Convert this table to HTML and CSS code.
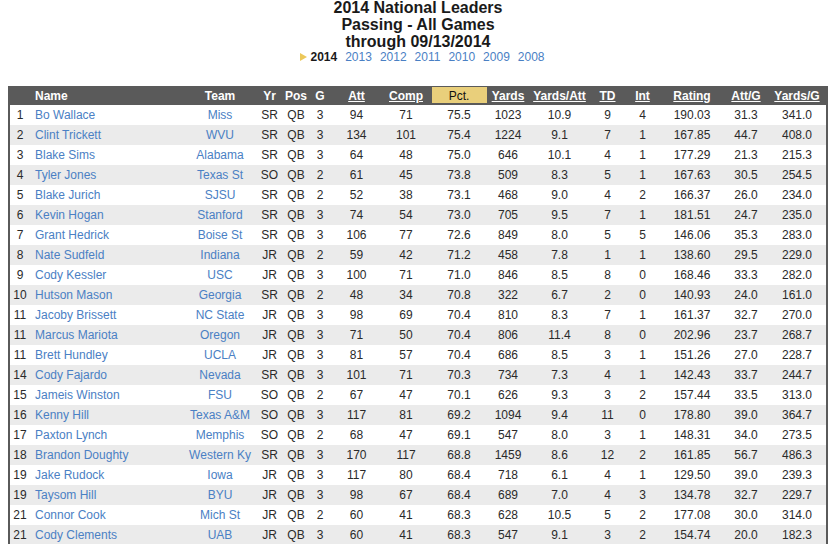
FILE: index.html
```html
<!DOCTYPE html>
<html>
<head>
<meta charset="utf-8">
<link rel="stylesheet" href="styles.css">
</head>
<body>
<div class="page">
  <h1 class="title">2014 National Leaders<br>Passing - All Games<br>through 09/13/2014</h1>
  <div class="years">
    <span class="marker"></span><span class="current">2014</span><a href="#">2013</a><a href="#">2012</a><a href="#">2011</a><a href="#">2010</a><a href="#">2009</a><a href="#">2008</a>
  </div>
  <table class="stats">
    <colgroup>
      <col class="c-rank"><col class="c-name"><col class="c-team"><col class="c-yr"><col class="c-pos"><col class="c-g"><col class="c-att"><col class="c-comp"><col class="c-pct"><col class="c-yds"><col class="c-ypa"><col class="c-td"><col class="c-int"><col class="c-rat"><col class="c-apg"><col class="c-ypg">
    </colgroup>
    <thead>
      <tr>
        <th></th><th class="left">Name</th><th>Team</th><th>Yr</th><th>Pos</th><th>G</th>
        <th><a href="#">Att</a></th><th><a href="#">Comp</a></th><th class="sorted">Pct.</th><th><a href="#">Yards</a></th><th><a href="#">Yards/Att</a></th><th><a href="#">TD</a></th><th><a href="#">Int</a></th><th><a href="#">Rating</a></th><th><a href="#">Att/G</a></th><th><a href="#">Yards/G</a></th>
      </tr>
    </thead>
    <tbody>
      <tr><td>1</td><td class="left"><a href="#">Bo Wallace</a></td><td><a href="#">Miss</a></td><td>SR</td><td>QB</td><td>3</td><td>94</td><td>71</td><td>75.5</td><td>1023</td><td>10.9</td><td>9</td><td>4</td><td>190.03</td><td>31.3</td><td>341.0</td></tr>
      <tr><td>2</td><td class="left"><a href="#">Clint Trickett</a></td><td><a href="#">WVU</a></td><td>SR</td><td>QB</td><td>3</td><td>134</td><td>101</td><td>75.4</td><td>1224</td><td>9.1</td><td>7</td><td>1</td><td>167.85</td><td>44.7</td><td>408.0</td></tr>
      <tr><td>3</td><td class="left"><a href="#">Blake Sims</a></td><td><a href="#">Alabama</a></td><td>SR</td><td>QB</td><td>3</td><td>64</td><td>48</td><td>75.0</td><td>646</td><td>10.1</td><td>4</td><td>1</td><td>177.29</td><td>21.3</td><td>215.3</td></tr>
      <tr><td>4</td><td class="left"><a href="#">Tyler Jones</a></td><td><a href="#">Texas St</a></td><td>SO</td><td>QB</td><td>2</td><td>61</td><td>45</td><td>73.8</td><td>509</td><td>8.3</td><td>5</td><td>1</td><td>167.63</td><td>30.5</td><td>254.5</td></tr>
      <tr><td>5</td><td class="left"><a href="#">Blake Jurich</a></td><td><a href="#">SJSU</a></td><td>SR</td><td>QB</td><td>2</td><td>52</td><td>38</td><td>73.1</td><td>468</td><td>9.0</td><td>4</td><td>2</td><td>166.37</td><td>26.0</td><td>234.0</td></tr>
      <tr><td>6</td><td class="left"><a href="#">Kevin Hogan</a></td><td><a href="#">Stanford</a></td><td>SR</td><td>QB</td><td>3</td><td>74</td><td>54</td><td>73.0</td><td>705</td><td>9.5</td><td>7</td><td>1</td><td>181.51</td><td>24.7</td><td>235.0</td></tr>
      <tr><td>7</td><td class="left"><a href="#">Grant Hedrick</a></td><td><a href="#">Boise St</a></td><td>SR</td><td>QB</td><td>3</td><td>106</td><td>77</td><td>72.6</td><td>849</td><td>8.0</td><td>5</td><td>5</td><td>146.06</td><td>35.3</td><td>283.0</td></tr>
      <tr><td>8</td><td class="left"><a href="#">Nate Sudfeld</a></td><td><a href="#">Indiana</a></td><td>JR</td><td>QB</td><td>2</td><td>59</td><td>42</td><td>71.2</td><td>458</td><td>7.8</td><td>1</td><td>1</td><td>138.60</td><td>29.5</td><td>229.0</td></tr>
      <tr><td>9</td><td class="left"><a href="#">Cody Kessler</a></td><td><a href="#">USC</a></td><td>JR</td><td>QB</td><td>3</td><td>100</td><td>71</td><td>71.0</td><td>846</td><td>8.5</td><td>8</td><td>0</td><td>168.46</td><td>33.3</td><td>282.0</td></tr>
      <tr><td>10</td><td class="left"><a href="#">Hutson Mason</a></td><td><a href="#">Georgia</a></td><td>SR</td><td>QB</td><td>2</td><td>48</td><td>34</td><td>70.8</td><td>322</td><td>6.7</td><td>2</td><td>0</td><td>140.93</td><td>24.0</td><td>161.0</td></tr>
      <tr><td>11</td><td class="left"><a href="#">Jacoby Brissett</a></td><td><a href="#">NC State</a></td><td>JR</td><td>QB</td><td>3</td><td>98</td><td>69</td><td>70.4</td><td>810</td><td>8.3</td><td>7</td><td>1</td><td>161.37</td><td>32.7</td><td>270.0</td></tr>
      <tr><td>11</td><td class="left"><a href="#">Marcus Mariota</a></td><td><a href="#">Oregon</a></td><td>JR</td><td>QB</td><td>3</td><td>71</td><td>50</td><td>70.4</td><td>806</td><td>11.4</td><td>8</td><td>0</td><td>202.96</td><td>23.7</td><td>268.7</td></tr>
      <tr><td>11</td><td class="left"><a href="#">Brett Hundley</a></td><td><a href="#">UCLA</a></td><td>JR</td><td>QB</td><td>3</td><td>81</td><td>57</td><td>70.4</td><td>686</td><td>8.5</td><td>3</td><td>1</td><td>151.26</td><td>27.0</td><td>228.7</td></tr>
      <tr><td>14</td><td class="left"><a href="#">Cody Fajardo</a></td><td><a href="#">Nevada</a></td><td>SR</td><td>QB</td><td>3</td><td>101</td><td>71</td><td>70.3</td><td>734</td><td>7.3</td><td>4</td><td>1</td><td>142.43</td><td>33.7</td><td>244.7</td></tr>
      <tr><td>15</td><td class="left"><a href="#">Jameis Winston</a></td><td><a href="#">FSU</a></td><td>SO</td><td>QB</td><td>2</td><td>67</td><td>47</td><td>70.1</td><td>626</td><td>9.3</td><td>3</td><td>2</td><td>157.44</td><td>33.5</td><td>313.0</td></tr>
      <tr><td>16</td><td class="left"><a href="#">Kenny Hill</a></td><td><a href="#">Texas A&amp;M</a></td><td>SO</td><td>QB</td><td>3</td><td>117</td><td>81</td><td>69.2</td><td>1094</td><td>9.4</td><td>11</td><td>0</td><td>178.80</td><td>39.0</td><td>364.7</td></tr>
      <tr><td>17</td><td class="left"><a href="#">Paxton Lynch</a></td><td><a href="#">Memphis</a></td><td>SO</td><td>QB</td><td>2</td><td>68</td><td>47</td><td>69.1</td><td>547</td><td>8.0</td><td>3</td><td>1</td><td>148.31</td><td>34.0</td><td>273.5</td></tr>
      <tr><td>18</td><td class="left"><a href="#">Brandon Doughty</a></td><td><a href="#">Western Ky</a></td><td>SR</td><td>QB</td><td>3</td><td>170</td><td>117</td><td>68.8</td><td>1459</td><td>8.6</td><td>12</td><td>2</td><td>161.85</td><td>56.7</td><td>486.3</td></tr>
      <tr><td>19</td><td class="left"><a href="#">Jake Rudock</a></td><td><a href="#">Iowa</a></td><td>JR</td><td>QB</td><td>3</td><td>117</td><td>80</td><td>68.4</td><td>718</td><td>6.1</td><td>4</td><td>1</td><td>129.50</td><td>39.0</td><td>239.3</td></tr>
      <tr><td>19</td><td class="left"><a href="#">Taysom Hill</a></td><td><a href="#">BYU</a></td><td>JR</td><td>QB</td><td>3</td><td>98</td><td>67</td><td>68.4</td><td>689</td><td>7.0</td><td>4</td><td>3</td><td>134.78</td><td>32.7</td><td>229.7</td></tr>
      <tr><td>21</td><td class="left"><a href="#">Connor Cook</a></td><td><a href="#">Mich St</a></td><td>JR</td><td>QB</td><td>2</td><td>60</td><td>41</td><td>68.3</td><td>628</td><td>10.5</td><td>5</td><td>2</td><td>177.08</td><td>30.0</td><td>314.0</td></tr>
      <tr><td>21</td><td class="left"><a href="#">Cody Clements</a></td><td><a href="#">UAB</a></td><td>JR</td><td>QB</td><td>3</td><td>60</td><td>41</td><td>68.3</td><td>547</td><td>9.1</td><td>3</td><td>2</td><td>154.74</td><td>20.0</td><td>182.3</td></tr>
    </tbody>
  </table>
</div>
</body>
</html>
```

FILE: styles.css
```css
html, body {
  margin: 0;
  padding: 0;
  background: #ffffff;
}
body {
  font-family: "Liberation Sans", Arial, sans-serif;
  font-size: 12px;
  color: #222222;
}
.page {
  width: 820px;
  margin-left: 8px;
}
.title {
  margin: -1px 0 0 0;
  font-size: 16px;
  line-height: 17px;
  font-weight: bold;
  text-align: center;
  color: #1a1a1a;
}
.years {
  display: flex;
  justify-content: center;
  align-items: center;
  gap: 8px;
  line-height: 14px;
  height: 14px;
  padding-left: 9px;
}
.years a {
  color: #4a80c4;
  text-decoration: none;
}
.marker {
  width: 0;
  height: 0;
  border-left: 7px solid #ecc85a;
  border-top: 4px solid transparent;
  border-bottom: 4px solid transparent;
  margin-right: -5px;
}
.current {
  font-weight: bold;
  color: #1a1a1a;
}
.stats {
  margin-top: 22px;
  border-collapse: separate;
  border-spacing: 0;
  table-layout: fixed;
  width: 820px;
  border-left: 2px solid #5a5a5a;
  border-right: 2px solid #5a5a5a;
}
.c-rank { width: 20px; }
.c-name { width: 155px; }
.c-team { width: 70px; }
.c-yr { width: 29px; }
.c-pos { width: 24px; }
.c-g { width: 24px; }
.c-att { width: 49px; }
.c-comp { width: 50px; }
.c-pct { width: 56px; }
.c-yds { width: 42px; }
.c-ypa { width: 61px; }
.c-td { width: 35px; }
.c-int { width: 35px; }
.c-rat { width: 64px; }
.c-apg { width: 44px; }
.c-ypg { width: 58px; }
.stats th {
  background: #5a5a5a;
  color: #ffffff;
  font-weight: bold;
  height: 19px;
  padding: 0;
  text-align: center;
  white-space: nowrap;
}
.stats th a {
  color: #ffffff;
  text-decoration: underline;
}
.stats th.sorted {
  background: #e9cf7b;
  color: #111111;
  font-weight: normal;
  box-shadow: inset 0 1px 0 0 #5a5a5a, inset 0 -2px 0 0 #5a5a5a, inset 1px 0 0 0 #5a5a5a;
}
.stats td {
  height: 20px;
  padding: 0;
  text-align: center;
  white-space: nowrap;
  color: #2a2a2a;
}
.stats .left {
  text-align: left;
  padding-left: 5px;
}
.stats tbody tr:nth-child(even) td {
  background: #ebebeb;
}
.stats td a {
  color: #4a80c4;
  text-decoration: none;
}
```
